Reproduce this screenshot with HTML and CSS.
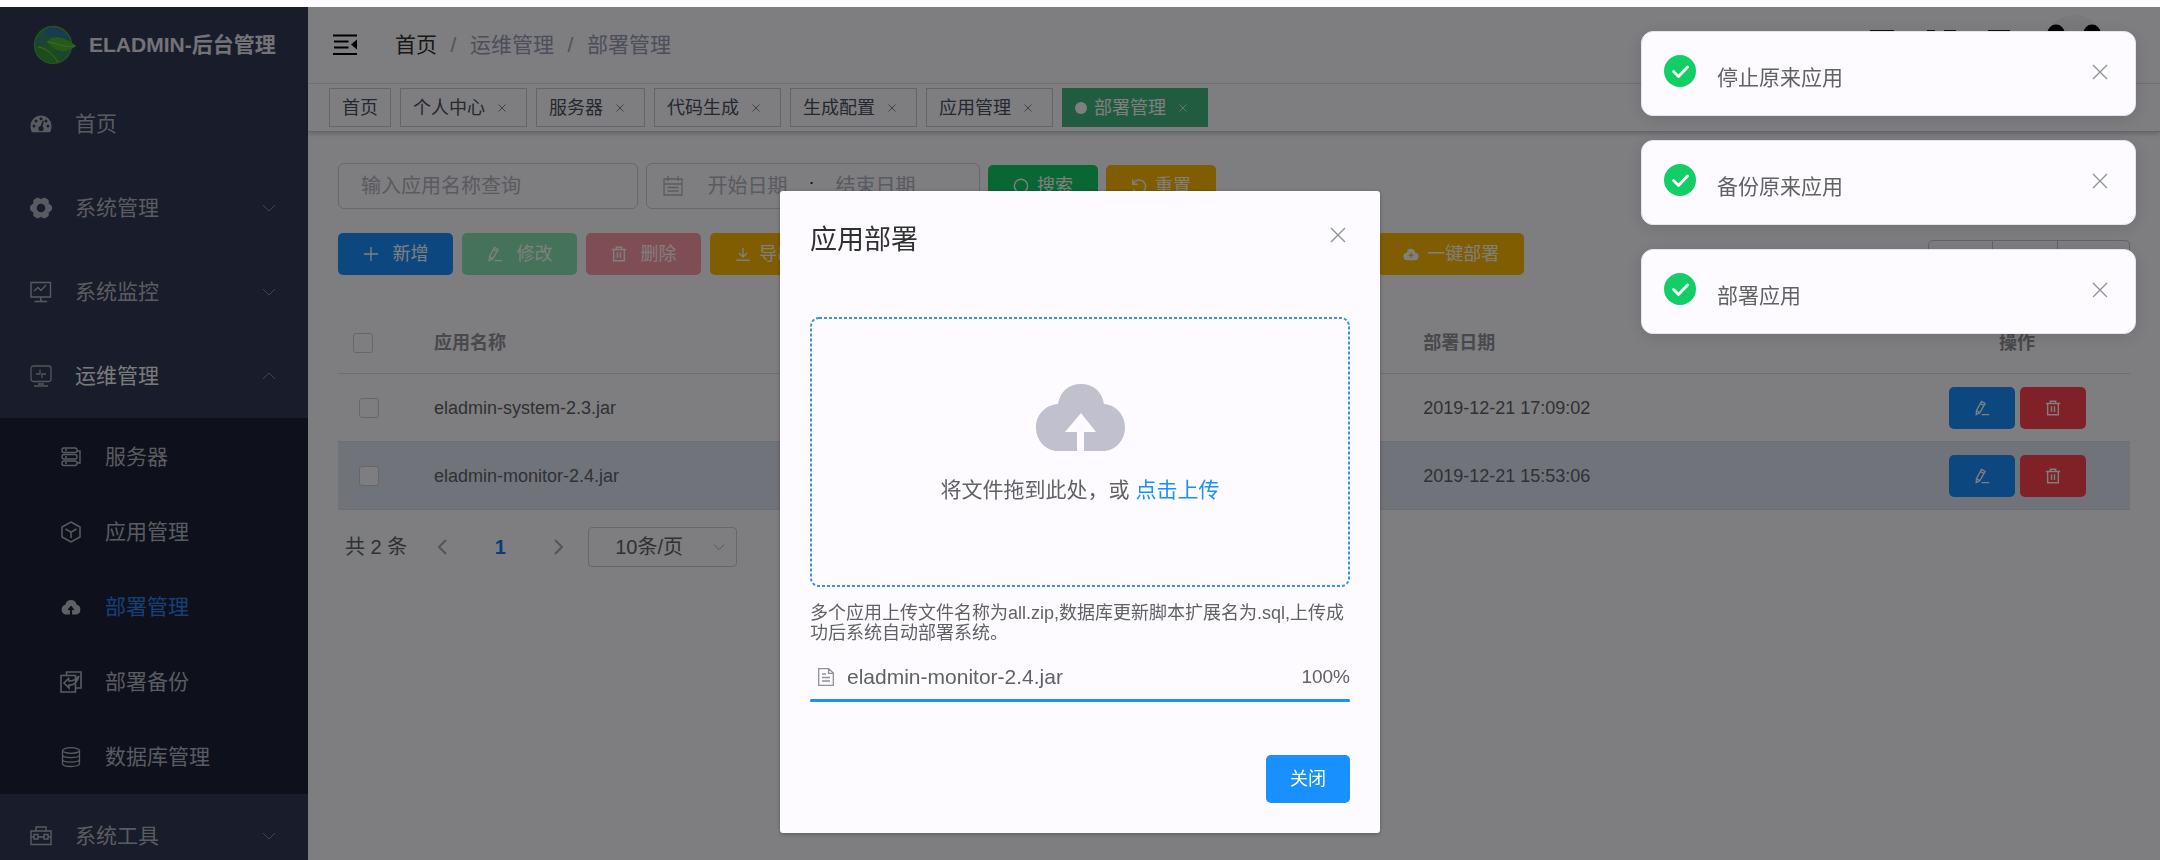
FILE: index.html
```html
<!DOCTYPE html>
<html lang="zh-CN">
<head>
<meta charset="utf-8">
<title>ELADMIN-后台管理</title>
<link rel="stylesheet" href="styles.css">
</head>
<body>
<svg class="sprite" aria-hidden="true">
  <symbol id="down" viewBox="0 0 14 8"><path d="M1 1l6 6 6-6" fill="none" stroke="currentColor"/></symbol>
  <symbol id="cross" viewBox="0 0 16 16"><path d="M1 1l14 14M15 1L1 15" fill="none" stroke="currentColor" stroke-width="1.4"/></symbol>
  <symbol id="edit" viewBox="0 0 18 18"><path d="M8.500 1.500l4 2.300-6 10.500-4 2.200.3-4.800zM7.300 4l3.800 2.200M2.800 12l3.500 2.200M8.500 16.500H17" fill="none" stroke="currentColor" stroke-width="1.5"/></symbol>
  <symbol id="trash" viewBox="0 0 18 18"><path d="M1 4h16M6 3.500v-2h6v2M3 4v12.500h12V4M7.300 7v6.500M10.700 7v6.500" fill="none" stroke="currentColor" stroke-width="1.6"/></symbol>
  <symbol id="ok" viewBox="0 0 32 32"><circle cx="16" cy="16" r="16" fill="#13ce66"/><path d="M9.500 16.500l5 5 9-9.500" fill="none" stroke="#fff" stroke-width="2.800" stroke-linecap="round" stroke-linejoin="round"/></symbol>
</svg>

<div class="app">
  <aside class="sidebar">
    <a class="brand" href="#">
      <svg width="44" height="40" viewBox="0 0 44 40"><circle cx="20" cy="20" r="18.500" fill="#33896c" stroke="#45a83a" stroke-width="1.500"/><path d="M16 3C26 1 36 8 37 17C30 12 23 10 15 12C10 8 12 4 16 3Z" fill="#2f78a4"/><path d="M14 17C20 9 32 12 43 21C34 28 24 29 14 17Z" fill="#4cb52d"/><path d="M3 22C13 16 25 22 28 36C16 41 5 34 3 22Z" fill="#38983d"/><path d="M14 17c9 0 13 6 28 4M5 22c9 1 15 8 20 15" stroke="#81d64a" fill="none"/></svg>
      <span>ELADMIN-后台管理</span>
    </a>
    <nav class="menu">
      <a class="item" href="#"><svg class="ico" viewBox="0 0 22 22"><path d="M11 2.500A10.500 10.500 0 0 0 .5 13c0 2.500.6 4.500 1.500 6.300h18c.9-1.800 1.500-3.800 1.500-6.300A10.500 10.500 0 0 0 11 2.500z" fill="currentColor"/><g fill="#303856"><circle cx="4" cy="13" r="1.500"/><circle cx="6" cy="8" r="1.500"/><circle cx="11" cy="5.800" r="1.500"/><circle cx="18" cy="13" r="1.500"/><circle cx="16" cy="8" r="1.500"/><circle cx="11" cy="15.500" r="2.600"/><path d="M10 15l2.600-7.500 1.300.4L12 15.500z"/></g></svg><span>首页</span></a>
      <a class="item" href="#"><svg class="ico" viewBox="0 0 22 22"><path d="M7.500 1l3.500 1.500L14.500 1l3.500 2 .3 3.700L21.500 9v4l-3.200 2.300L18 19l-3.500 2-3.500-1.500L7.500 21 4 19l-.3-3.700L.5 13V9l3.200-2.300L4 3z" fill="currentColor" stroke="currentColor" stroke-linejoin="round"/><circle cx="11" cy="11" r="4.300" fill="#303856"/></svg><span>系统管理</span><svg class="arrow"><use href="#down"/></svg></a>
      <a class="item" href="#"><svg class="ico" viewBox="0 0 22 22"><path d="M1 1.500h19.500V16H1zM10.800 16v4.500M4.500 20.500h12.500M4 10l4-3.500 3 3 5-5.500" fill="none" stroke="currentColor" stroke-width="1.400"/></svg><span>系统监控</span><svg class="arrow"><use href="#down"/></svg></a>
      <a class="item open" href="#"><svg class="ico" viewBox="0 0 22 22"><rect x="1" y="1" width="20" height="15.500" rx="2.500" fill="none" stroke="currentColor" stroke-width="1.300"/><path d="M4 21h14M8 19h6M6 9h4V4.500M12 13V9h4" fill="none" stroke="currentColor" stroke-width="1.300"/></svg><span>运维管理</span><svg class="arrow up"><use href="#down"/></svg></a>
      <div class="submenu">
        <a class="subitem" href="#"><svg class="ico" viewBox="0 0 22 22"><g fill="none" stroke="currentColor" stroke-width="1.400"><rect x="2" y="2" width="15" height="4.500" rx="2"/><rect x="2" y="8.500" width="15" height="4.500" rx="2"/><rect x="2" y="15" width="15" height="4.500" rx="2"/><path d="M17 5h3v12h-3M5 4h2M5 11h2M5 17h2"/></g></svg><span>服务器</span></a>
        <a class="subitem" href="#"><svg class="ico" viewBox="0 0 22 22"><path d="M11 1l9 5v10l-9 5-9-5V6zM5.500 8l5.500 3.200L16.500 8M11 11v6" fill="none" stroke="currentColor" stroke-width="1.500"/></svg><span>应用管理</span></a>
        <a class="subitem active" href="#"><svg class="ico" viewBox="0 0 22 22"><path d="M5.500 8.500a5.600 5.600 0 0 1 11 0 5.200 5.200 0 0 1 .2 10h-4.600V14h2.500L11 9.500 7.400 14h2.500v4.500H5.300a5.200 5.200 0 0 1 .2-10z" fill="currentColor"/></svg><span>部署管理</span></a>
        <a class="subitem" href="#"><svg class="ico" viewBox="0 0 22 22"><path d="M6.500 4V1h14.500v16h-5M1 4.500h14.500V21H1zM8.500 7.500L4 12l5 5v-3c4 .5 8-2 10-9-3 4-6 5-10 5z" fill="none" stroke="currentColor" stroke-width="1.600"/></svg><span>部署备份</span></a>
        <a class="subitem" href="#"><svg class="ico" viewBox="0 0 22 22"><g fill="none" stroke="currentColor" stroke-width="1.300"><ellipse cx="11" cy="4.500" rx="8.500" ry="2.800"/><path d="M2.500 4.500v13c0 4 17 4 17 0v-13M2.500 9c0 3.500 17 3.500 17 0M2.500 13.500c0 3.500 17 3.500 17 0"/></g></svg><span>数据库管理</span></a>
      </div>
      <a class="item" href="#"><svg class="ico" viewBox="0 0 22 22"><path d="M1 6h20v13.500H1zM6 6V2h10v4M1 12h3M18 12h3M8.500 12h5M4 9.500h4v4.500H4zM14 9.500h4v4.500h-4z" fill="none" stroke="currentColor" stroke-width="1.400"/></svg><span>系统工具</span><svg class="arrow"><use href="#down"/></svg></a>
    </nav>
  </aside>

  <main class="main">
    <header class="navbar">
      <button class="fold" aria-label="收起菜单"><svg width="24" height="22" viewBox="0 0 24 22"><path d="M0 1.500h24M1 7.500h14.500M1 13.500h14.500M0 20h24" stroke="#000" stroke-width="2.200"/><path d="M18 10.500l6-5v10z"/></svg></button>
      <nav class="crumbs"><a href="#">首页</a><i>/</i><span>运维管理</span><i>/</i><span>部署管理</span></nav>
      <div class="tools">
        <svg width="24" height="30" viewBox="0 0 24 30"><path d="M1 1h22v28H1zM6 10h12M6 17h12" fill="none" stroke="#222" stroke-width="2"/></svg>
        <svg width="30" height="30" viewBox="0 0 30 30"><path d="M1 1h8M1 1v28h8M18 1h11v28H18" fill="none" stroke="#222" stroke-width="2"/></svg>
        <svg width="24" height="30" viewBox="0 0 24 30"><path d="M1 1h20v20H1zM5 28h12" fill="none" stroke="#222" stroke-width="2"/></svg>
        <svg class="avatar" width="60" height="60" viewBox="0 0 60 60"><circle cx="30" cy="30" r="30" fill="#f3f0f4"/><circle cx="12" cy="18" r="8.500"/><circle cx="48" cy="18" r="8.500"/><circle cx="30" cy="36" r="19" fill="#fff" stroke="#000"/></svg>
      </div>
    </header>

    <div class="tags">
      <a class="tag" href="#">首页</a>
      <a class="tag" href="#">个人中心<svg class="tx"><use href="#cross"/></svg></a>
      <a class="tag" href="#">服务器<svg class="tx"><use href="#cross"/></svg></a>
      <a class="tag" href="#">代码生成<svg class="tx"><use href="#cross"/></svg></a>
      <a class="tag" href="#">生成配置<svg class="tx"><use href="#cross"/></svg></a>
      <a class="tag" href="#">应用管理<svg class="tx"><use href="#cross"/></svg></a>
      <a class="tag current" href="#">部署管理<svg class="tx"><use href="#cross"/></svg></a>
    </div>

    <section class="content">
      <form class="search">
        <input class="field" type="text" aria-label="应用名称" placeholder="输入应用名称查询">
        <div class="field range">
          <svg width="20" height="20" viewBox="0 0 20 20"><path d="M1 3h18v16H1zM1 8h18M5 0v5M15 0v5M4.500 11.500h11M4.500 15h11" fill="none" stroke="currentColor" stroke-width="1.300"/></svg>
          <input type="text" aria-label="开始日期" placeholder="开始日期">
          <span>:</span>
          <input type="text" aria-label="结束日期" placeholder="结束日期">
        </div>
        <button type="button" class="btn green"><svg viewBox="0 0 18 18"><path d="M16.500 9A7.500 7.500 0 1 1 1.500 9a7.500 7.500 0 0 1 15 0zM14 14.500l3 3" fill="none" stroke="currentColor" stroke-width="1.600"/></svg>搜索</button>
        <button type="button" class="btn orange"><svg viewBox="0 0 18 18"><path d="M2 1.500V7h5.500M2.500 6.500a7.300 7.300 0 1 1 0 6" fill="none" stroke="currentColor" stroke-width="1.600"/></svg>重置</button>
      </form>

      <div class="toolbar">
        <div class="actions">
          <button class="btn wide blue"><svg viewBox="0 0 18 18"><path d="M9 1v16M1 9h16" fill="none" stroke="currentColor" stroke-width="1.500"/></svg>新增</button>
          <button class="btn wide green" disabled><svg><use href="#edit"/></svg>修改</button>
          <button class="btn wide red" disabled><svg><use href="#trash"/></svg>删除</button>
          <button class="btn orange"><svg viewBox="0 0 18 18"><path d="M9 2v10M4.500 8L9 12.500 13.500 8M1.500 16h15" fill="none" stroke="currentColor" stroke-width="1.600"/></svg>导出</button>
          <button class="btn orange deploy"><svg viewBox="0 0 18 18"><path d="M4.500 7.500a4.500 4.500 0 0 1 9 0 4.200 4.200 0 0 1-.3 8.500H4.800a4.200 4.200 0 0 1-.3-8.500z" fill="currentColor"/><path d="M9 8v5M6.500 10.500h5" stroke="#ffba00" stroke-width="1.500"/></svg>一键部署</button>
        </div>
        <div class="tablebtns"><button aria-label="搜索栏"></button><button aria-label="刷新"></button><button aria-label="列设置"></button></div>
      </div>

      <table class="grid">
        <colgroup><col class="c-check"><col class="c-name"><col><col class="c-op"></colgroup>
        <thead><tr><th class="ck"><input type="checkbox" aria-label="全选"></th><th>应用名称</th><th>部署日期</th><th class="op">操作</th></tr></thead>
        <tbody>
          <tr><td class="ck"><input type="checkbox" aria-label="选择 eladmin-system-2.3.jar"></td><td>eladmin-system-2.3.jar</td><td>2019-12-21 17:09:02</td><td class="op"><div class="ops"><button class="btn blue" aria-label="编辑"><svg><use href="#edit"/></svg></button><button class="btn red" aria-label="删除"><svg><use href="#trash"/></svg></button></div></td></tr>
          <tr class="selected"><td class="ck"><input type="checkbox" aria-label="选择 eladmin-monitor-2.4.jar"></td><td>eladmin-monitor-2.4.jar</td><td>2019-12-21 15:53:06</td><td class="op"><div class="ops"><button class="btn blue" aria-label="编辑"><svg><use href="#edit"/></svg></button><button class="btn red" aria-label="删除"><svg><use href="#trash"/></svg></button></div></td></tr>
        </tbody>
      </table>

      <div class="pager">
        <span>共 2 条</span>
        <button aria-label="上一页"><svg width="9" height="16" viewBox="0 0 9 16"><path d="M8 1L1 8l7 7" fill="none" stroke="#aaa8b0" stroke-width="2"/></svg></button>
        <button class="num">1</button>
        <button aria-label="下一页"><svg width="9" height="16" viewBox="0 0 9 16"><path d="M1 1l7 7-7 7" fill="none" stroke="#aaa8b0" stroke-width="2"/></svg></button>
        <div class="size"><select aria-label="每页条数"><option>10条/页</option></select><svg><use href="#down"/></svg></div>
      </div>
    </section>
  </main>
</div>

<div class="mask">
  <div class="dialog" role="dialog" aria-labelledby="dlg-title">
    <div class="dlg-head"><h2 id="dlg-title">应用部署</h2><button class="x" aria-label="关闭"><svg><use href="#cross"/></svg></button></div>
    <div class="drop">
      <svg class="outline"><rect x="1" y="1" rx="8"/></svg>
      <svg class="cloud" viewBox="0 0 89 67"><path d="M22 20C24 8 32 0 45 0S66 8 68 20C80 21 89 31 89 43C89 57 79 67 67 67H48V48H60L45 29L29 48H41V67H22C10 67 0 57 0 43C0 31 9 21 22 20Z"/></svg>
      <p>将文件拖到此处，或 <a href="#">点击上传</a></p>
    </div>
    <p class="tip">多个应用上传文件名称为all.zip,数据库更新脚本扩展名为.sql,上传成功后系统自动部署系统。</p>
    <div class="file"><svg viewBox="0 0 16 18"><path d="M.7.7h10L15.300 5v12.300H.7zM10.500.7V5.300h4.800M4 6h4M4 9.500h8M4 13h8" fill="none" stroke="currentColor" stroke-width="1.300"/></svg><span>eladmin-monitor-2.4.jar</span><b>100%</b></div>
    <div class="bar"><div style="width:100%"></div></div>
    <div class="dlg-foot"><button class="btn blue close">关闭</button></div>
  </div>
</div>

<div class="toasts">
  <div class="toast" role="alert"><svg class="ok"><use href="#ok"/></svg><p>停止原来应用</p><button class="x" aria-label="关闭"><svg><use href="#cross"/></svg></button></div>
  <div class="toast" role="alert"><svg class="ok"><use href="#ok"/></svg><p>备份原来应用</p><button class="x" aria-label="关闭"><svg><use href="#cross"/></svg></button></div>
  <div class="toast" role="alert"><svg class="ok"><use href="#ok"/></svg><p>部署应用</p><button class="x" aria-label="关闭"><svg><use href="#cross"/></svg></button></div>
</div>
</body>
</html>
```

FILE: styles.css
```css
* { box-sizing: border-box; }
body { margin: 0; background: #fdfbff; color: #606266; font: 18px/24px "Liberation Sans", "Noto Sans CJK SC", sans-serif; overflow: hidden; }
button, input, select { font: inherit; color: inherit; margin: 0; padding: 0; border: 0; background: none; }
a { color: inherit; text-decoration: none; }
p, h2 { margin: 0; }
svg { flex: none; }
.sprite { position: absolute; width: 0; height: 0; }

.app { display: flex; height: calc(100vh - 7px); margin-top: 7px; }

/* sidebar */
.sidebar { flex: none; width: 308px; overflow: hidden; background: #303856; color: #b4b6c2; font-size: 21px; }
.brand { display: flex; align-items: center; gap: 12px; height: 75px; padding-left: 33px; font-weight: bold; color: #e8e4ee; }
.item, .subitem { display: flex; align-items: center; gap: 23px; height: 84px; padding: 0 32px 0 30px; }
.item.open { color: #f4f4f5; }
.item.open .ico { color: #a8aab6; }
.ico { width: 22px; height: 22px; }
.arrow { width: 14px; height: 8px; margin-left: auto; color: #868896; }
.up { transform: rotate(180deg); }
.submenu { padding-top: 1px; background: #1c2238; }
.subitem { height: 75px; padding-left: 60px; }
.active { color: #2f80ee; }
.active .ico { color: #c0c2cc; }

/* top bars */
.main { flex: 1; min-width: 0; }
.navbar { display: flex; align-items: center; height: 77px; padding: 0 56px 0 25px; border-bottom: 1px solid #e6e3ea; font-size: 21px; }
.fold { display: flex; margin-right: 38px; }
.crumbs { display: flex; }
.crumbs a { color: #303133; }
.crumbs span { color: #9a9cb6; }
.crumbs i { width: 33px; text-align: center; font-style: normal; color: #a5a6b2; }
.tools { display: flex; align-items: center; gap: 32px; margin-left: auto; }
.tags { display: flex; gap: 9px; height: 48px; padding: 4px 21px; border-bottom: 1px solid #d0cdd6; box-shadow: 0 2px 4px #00000030; }
.tag { display: flex; align-items: center; height: 39px; padding: 0 12px; border: 1px solid #c9c8d4; color: #495060; white-space: nowrap; }
.tx { width: 8px; height: 8px; margin: 0 8px 0 13px; }
.tag.current { background: #42b983; border-color: #42b983; color: #fff; }
.tag.current::before { content: ""; width: 12px; height: 12px; margin-right: 7px; border-radius: 50%; background: #fff; }

/* filters */
.content { padding: 31px 30px; }
.search { display: flex; align-items: center; gap: 8px; }
.field { width: 300px; height: 46px; padding: 0 22px; border: 1px solid #d0cfda; border-radius: 6px; font-size: 20px; }
::placeholder { color: #b4b5c2; opacity: 1; }
.range { display: flex; align-items: center; width: 334px; padding: 0 16px; color: #b4b5c2; }
.range input { width: 105px; text-align: center; }
.range svg { margin-right: 12px; }
.range span { width: 23px; text-align: center; color: #303133; }
.btn { display: inline-flex; align-items: center; justify-content: center; gap: 8px; height: 42px; min-width: 110px; border-radius: 5px; color: #fff; font-size: 18px; white-space: nowrap; }
.btn svg { width: 16px; height: 16px; }
.wide { min-width: 115px; gap: 14px; }
.blue { background: #1890ff; }
.green { background: #13ce66; }
.orange { background: #ffba00; }
.red { background: #ff424e; }
.green:disabled { background: #89e7b3; }
.red:disabled { background: #ff9caa; }
.toolbar { display: flex; justify-content: space-between; margin-top: 24px; }
.actions { display: flex; gap: 9px; width: 66.2%; }
.deploy { min-width: 146px; margin-left: auto; }
.tablebtns { display: flex; margin-top: 7px; }
.tablebtns button { width: 65px; height: 42px; border: 1px solid #c4c4ce; border-left-width: 0; }
.tablebtns button:first-child { border-left-width: 1px; border-radius: 5px 0 0 5px; }
.tablebtns button:last-child { width: 72px; border-radius: 0 5px 5px 0; }

/* table */
.grid { width: 100%; margin-top: 25px; border-collapse: collapse; table-layout: fixed; }
.c-check { width: 82px; }
.c-name { width: 55.2%; }
.c-op { width: 226px; }
.grid th, .grid td { height: 68px; padding: 2px 14px 0; border-bottom: 1px solid #dcdbe6; text-align: left; }
.grid th { height: 66px; padding-top: 6px; color: #909399; }
.grid .ck { padding-left: 21px; }
.grid th.ck { padding-left: 15px; }
.grid .op { text-align: center; }
.grid input { display: block; appearance: none; width: 20px; height: 20px; border: 1px solid #cfcdd6; border-radius: 3px; background: #fdfbff; }
.selected { background: #e2e7f6; }
.ops { display: flex; justify-content: center; gap: 5px; }
.ops .btn { min-width: 66px; }

/* pagination */
.pager { display: flex; align-items: center; height: 40px; margin: 17px 7px; font-size: 20px; }
.pager button { display: flex; align-items: center; justify-content: center; width: 58px; height: 40px; }
.pager > span { margin-right: 6px; }
.pager .num { font-weight: bold; color: #1676f0; }
.size { display: flex; align-items: center; width: 149px; height: 40px; margin-left: 1px; padding-right: 11px; border: 1px solid #cfcdd8; border-radius: 4px; }
.size select { appearance: none; flex: 1; padding-left: 26px; height: 38px; }
.size svg { width: 12px; height: 8px; color: #a0a0aa; }

/* dialog */
.mask { position: fixed; inset: 7px 0 0; display: flex; justify-content: center; align-items: flex-start; padding-top: 184px; background: #00000080; }
.dialog { width: 600px; padding: 30px; border-radius: 3px; background: #fdfbff; box-shadow: 0 1px 4px #0000004d; }
.dlg-head { display: flex; justify-content: space-between; align-items: center; height: 38px; }
.dlg-head h2 { font-size: 27px; line-height: 32px; font-weight: normal; color: #303133; }
.x { display: flex; color: #909399; }
.x svg { width: 16px; height: 16px; }
.dialog .x { margin: 0 4px 10px 0; }
.drop { position: relative; display: flex; flex-direction: column; align-items: center; height: 270px; margin-top: 58px; padding-top: 67px; font-size: 21px; }
.outline { position: absolute; inset: 0; width: 100%; height: 100%; }
.outline rect { width: calc(100% - 2px); height: calc(100% - 2px); fill: none; stroke: #3c93e6; stroke-width: 2px; stroke-dasharray: 3 2; }
.cloud { width: 89px; height: 67px; fill: #c0c0ce; }
.drop p { position: relative; margin-top: 27px; }
.drop a { color: #1890ff; }
.tip { margin-top: 16px; line-height: 20px; }
.file { display: flex; align-items: center; gap: 13px; margin-top: 20px; padding-left: 8px; line-height: 28px; font-size: 21px; }
.file svg { width: 16px; height: 18px; color: #909399; }
.file b { margin-left: auto; font-weight: normal; font-size: 19px; }
.bar { height: 3px; margin-top: 8px; border-radius: 2px; background: #e6e6ee; }
.bar div { height: 3px; border-radius: 2px; background: #1890ff; }
.dlg-foot { display: flex; justify-content: flex-end; margin-top: 53px; }
.close { min-width: 84px; height: 48px; }

/* notifications */
.toasts { position: fixed; top: 31px; right: 24px; display: flex; flex-direction: column; gap: 24px; }
.toast { display: flex; align-items: flex-start; width: 495px; height: 85px; padding: 23px 27px 0 22px; border: 1px solid #e6e4f0; border-radius: 12px; background: #fdfbff; box-shadow: 0 3px 18px #0000001f; font-size: 21px; }
.ok { width: 32px; height: 32px; }
.toast p { flex: 1; margin: 11px 0 0 21px; }
.toast .x { margin-top: 9px; }
```
